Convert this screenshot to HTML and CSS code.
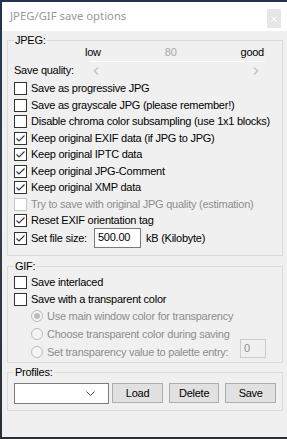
FILE: index.html
```html
<!DOCTYPE html>
<html>
<head>
<meta charset="utf-8">
<link rel="stylesheet" href="styles.css">
</head>
<body>
<div class="win">
  <div class="titlebar">
    <span class="title">JPEG/GIF save options</span>
    <span class="close"><svg width="6" height="6" viewBox="0 0 6 6"><path d="M0.5 0.5L5.5 5.5M5.5 0.5L0.5 5.5" stroke="#fff" stroke-width="1"/></svg></span>
  </div>
  <div class="client">
    <fieldset class="group jpeg">
      <legend>JPEG:</legend>
      <div class="q-scale"><span>low</span><span class="q-val">80</span><span>good</span></div>
      <div class="q-track"></div>
      <div class="q-row">
        <span>Save quality:</span>
        <span class="scroll">
          <svg width="6" height="8" viewBox="0 0 6 8"><polyline points="5,0.5 1.5,4 5,7.5" fill="none" stroke="#c4c4c4" stroke-width="1.4"/></svg>
          <svg width="6" height="8" viewBox="0 0 6 8"><polyline points="1,0.5 4.5,4 1,7.5" fill="none" stroke="#c4c4c4" stroke-width="1.4"/></svg>
        </span>
      </div>
      <div class="list">
        <div class="row"><span class="cb"></span><span>Save as progressive JPG</span></div>
        <div class="row"><span class="cb"></span><span>Save as grayscale JPG (please remember!)</span></div>
        <div class="row"><span class="cb"></span><span>Disable chroma color subsampling (use 1x1 blocks)</span></div>
        <div class="row"><span class="cb"><svg width="11" height="11" viewBox="0 0 11 11"><polyline points="1.5,5.5 4,8 9.5,2.5" fill="none" stroke="#333" stroke-width="1.1"/></svg></span><span>Keep original EXIF data (if JPG to JPG)</span></div>
        <div class="row"><span class="cb"><svg width="11" height="11" viewBox="0 0 11 11"><polyline points="1.5,5.5 4,8 9.5,2.5" fill="none" stroke="#333" stroke-width="1.1"/></svg></span><span>Keep original IPTC data</span></div>
        <div class="row"><span class="cb"><svg width="11" height="11" viewBox="0 0 11 11"><polyline points="1.5,5.5 4,8 9.5,2.5" fill="none" stroke="#333" stroke-width="1.1"/></svg></span><span>Keep original JPG-Comment</span></div>
        <div class="row"><span class="cb"><svg width="11" height="11" viewBox="0 0 11 11"><polyline points="1.5,5.5 4,8 9.5,2.5" fill="none" stroke="#333" stroke-width="1.1"/></svg></span><span>Keep original XMP data</span></div>
        <div class="row disabled"><span class="cb"></span><span>Try to save with original JPG quality (estimation)</span></div>
        <div class="row short"><span class="cb"><svg width="11" height="11" viewBox="0 0 11 11"><polyline points="1.5,5.5 4,8 9.5,2.5" fill="none" stroke="#333" stroke-width="1.1"/></svg></span><span>Reset EXIF orientation tag</span></div>
        <div class="row file"><span class="cb"><svg width="11" height="11" viewBox="0 0 11 11"><polyline points="1.5,5.5 4,8 9.5,2.5" fill="none" stroke="#333" stroke-width="1.1"/></svg></span><span class="file-label">Set file size:</span><span class="edit">500.00</span><span class="unit">kB (Kilobyte)</span></div>
      </div>
    </fieldset>

    <fieldset class="group gif">
      <legend>GIF:</legend>
      <div class="list">
        <div class="row r17"><span class="cb"></span><span>Save interlaced</span></div>
        <div class="row r17"><span class="cb"></span><span>Save with a transparent color</span></div>
        <div class="row radio disabled"><span class="rb on"></span><span>Use main window color for transparency</span></div>
        <div class="row radio disabled"><span class="rb"></span><span>Choose transparent color during saving</span></div>
        <div class="row radio disabled last"><span class="rb"></span><span class="pal-label">Set transparency value to palette entry:</span><span class="edit small">0</span></div>
      </div>
    </fieldset>

    <fieldset class="group profiles">
      <legend>Profiles:</legend>
      <div class="prof-row">
        <span class="combo"><svg width="9" height="5" viewBox="0 0 9 5"><polyline points="0.5,0.5 4.5,4.5 8.5,0.5" fill="none" stroke="#444" stroke-width="1"/></svg></span>
        <span class="btn load">Load</span>
        <span class="btn">Delete</span>
        <span class="btn">Save</span>
      </div>
    </fieldset>
  </div>
</div>
</body>
</html>
```

FILE: styles.css
```css
html, body {
  margin: 0;
  height: 100%;
  overflow: hidden;
}
body {
  background: linear-gradient(180deg, #1f3452 0%, #3a4048 40%, #2a2f36 100%);
  font-family: "Liberation Sans", Arial, sans-serif;
  font-size: 11px;
  letter-spacing: -0.25px;
  color: #000;
}
.win {
  margin: 2px 0 0 2px;
  width: 285px;
  height: 435px;
  background: #f0f0f0;
  display: flex;
  flex-direction: column;
}
.titlebar {
  height: 29px;
  flex: none;
  background: #fff;
  display: flex;
  align-items: flex-start;
}
.title {
  font-family: "Noto Sans", sans-serif;
  font-size: 11.3px;
  letter-spacing: 0;
  line-height: 16px;
  color: #999;
  margin: 6px 0 0 8px;
}
.close {
  margin: 7px 6px 0 auto;
  width: 14px;
  height: 19px;
  background: #e6e6e6;
  display: flex;
  align-items: center;
  justify-content: center;
}
.client {
  padding: 4px 0 0 5px;
}
.group {
  margin: 0;
  padding: 0 6px 6px 6px;
  border: 1px solid #dcdcdc;
  width: 276px;
  box-sizing: border-box;
  min-width: 0;
}
.group legend {
  padding: 0 1px;
  line-height: 11px;
}
.jpeg {
  padding-bottom: 7px;
}
.q-scale {
  display: flex;
  justify-content: space-between;
  margin: 0 12px 0 71px;
  line-height: 13px;
}
.q-val {
  color: #a8a8a8;
}
.q-track {
  margin: 2px 11px 2px 76px;
  height: 1px;
  background: #fff;
}
.q-row {
  display: flex;
  align-items: center;
  height: 13px;
  line-height: 13px;
}
.scroll {
  margin: 0 17px 0 auto;
  width: 166px;
  display: flex;
  justify-content: space-between;
  align-items: center;
}
.jpeg .list {
  margin-top: 5px;
}
.row {
  display: flex;
  align-items: flex-start;
  height: 16.5px;
  line-height: 13px;
  white-space: nowrap;
}
.row .cb {
  flex: none;
  width: 13px;
  height: 13px;
  box-sizing: border-box;
  border: 1px solid #333;
  background: #fff;
  margin-right: 4px;
  display: flex;
  align-items: center;
  justify-content: center;
}
.row.short {
  height: 14px;
}
.row.file {
  height: 20px;
  align-items: center;
}
.file-label {
  width: 63px;
  flex: none;
}
.edit {
  box-sizing: border-box;
  width: 47px;
  height: 20px;
  border: 1px solid #7a7a7a;
  background: #fff;
  padding: 2px 0 0 3px;
  line-height: 13px;
}
.unit {
  margin-left: 5px;
}
.disabled {
  color: #8d8d8d;
}
.disabled .cb {
  border-color: #c6c6c6;
}
.gif {
  margin-top: 5px;
}
.gif .list {
  margin-top: 4px;
}
.row.r17 {
  height: 17px;
}
.row.radio {
  height: 18px;
  padding-left: 17px;
}
.row.radio.last {
  height: 10px;
}
.rb {
  flex: none;
  width: 12px;
  height: 12px;
  box-sizing: border-box;
  border: 1px solid #bcbcbc;
  border-radius: 50%;
  background: #f4f4f4;
  margin-right: 4px;
  display: flex;
  align-items: center;
  justify-content: center;
}
.rb.on::after {
  content: "";
  width: 6px;
  height: 6px;
  border-radius: 50%;
  background: #bcbcbc;
}
.pal-label {
  width: 193px;
  flex: none;
}
.edit.small {
  width: 26px;
  height: 19px;
  margin-top: -7px;
  border-color: #cccccc;
  background: #f0f0f0;
  color: #8d8d8d;
  padding-left: 3px;
}
.profiles {
  margin-top: 4px;
}
.prof-row {
  display: flex;
  align-items: flex-start;
  margin-top: 5px;
}
.combo {
  box-sizing: border-box;
  width: 96px;
  height: 21px;
  border: 1px solid #7a7a7a;
  background: #fff;
  display: flex;
  align-items: center;
  justify-content: flex-end;
  padding-right: 13px;
}
.btn {
  box-sizing: border-box;
  width: 51px;
  height: 20px;
  border: 1px solid #adadad;
  background: #e1e1e1;
  display: flex;
  align-items: center;
  justify-content: center;
  margin-left: 6px;
}
.btn.load {
  margin-left: 3px;
}
```
